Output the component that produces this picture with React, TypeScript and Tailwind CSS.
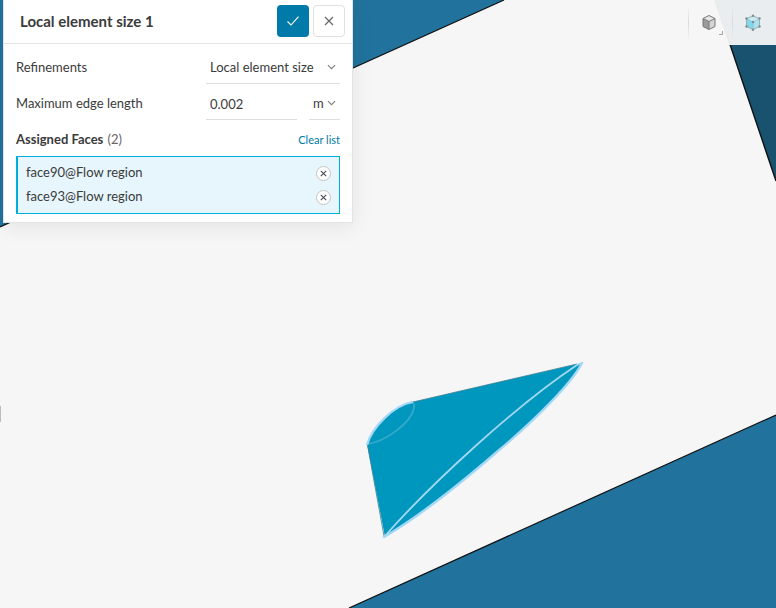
import { useState } from "react";

const FACES = ["face90@Flow region", "face93@Flow region"];

function Chevron() {
  return (
    <svg viewBox="0 0 10 6" className="pointer-events-none absolute top-4 right-1 h-[6px] w-[9px]" fill="none" stroke="#7c7c7c" strokeWidth="1.2" aria-hidden="true">
      <path d="M1 0.8 L5 4.8 L9 0.8" />
    </svg>
  );
}

function Scene() {
  return (
    <svg
      viewBox="0 0 776 608"
      preserveAspectRatio="xMinYMin slice"
      className="absolute inset-0 h-full w-full"
      role="img"
      aria-label="Model view"
    >
      <path d="M0 0 H504 L0 227 Z" fill="#21739d" />
      <path d="M504 0 L0 227" stroke="#101010" strokeWidth="1.2" />
      <path d="M349 608 L776 415 V608 Z" fill="#21739d" />
      <path d="M349 608 L776 415" stroke="#101010" strokeWidth="1.2" />
      <path d="M715 0 L776 181 V0 Z" fill="#19526e" />
      <path d="M715 0 L776 181" stroke="#101010" strokeWidth="1.4" />
      <path
        d="M367 444 C373 426 396 405 413 402 L582 363 C572 383 535 420 498 451 C460 484 420 516 385 537 Z"
        fill="#0097be"
      />
      <path d="M413 402 L577 364 M367.500 445 L384 536" stroke="#3b7f92" strokeWidth="0.8" />
      <path d="M367 444 C385 442 411 423 414 408 Q415 403 411 402" fill="none" stroke="#35a9ca" strokeWidth="1.8" />
      <path d="M367 445 C372 427 394 405 413 402" fill="none" stroke="#a3d8f5" strokeWidth="2.2" />
      <path d="M384 537 C429 486 515 406 577 365 L582 363" fill="none" stroke="#a3d8f5" strokeWidth="1.8" />
      <path
        d="M384 537 C420 516 460 484 498 451 C535 420 572 383 582 363"
        fill="none"
        stroke="#a3d8f5"
        strokeWidth="2.4"
        strokeLinecap="round"
      />
    </svg>
  );
}

function SolidCube() {
  return (
    <svg viewBox="0 0 16 18" className="h-[18px] w-4" strokeLinejoin="round" aria-hidden="true">
      <path d="M8 1.500 L14 4.500 L8 7.500 L2 4.500 Z" fill="#e6e6e6" />
      <path d="M2 4.500 L8 7.500 V15.500 L2 12.500 Z" fill="#9b9b9b" />
      <path d="M14 4.500 L8 7.500 V15.500 L14 12.500 Z" fill="#d4d4d4" />
      <path d="M8 1.500 L14 4.500 V12.500 L8 15.500 L2 12.500 V4.500 Z M2 4.500 L8 7.500 L14 4.500 M8 7.500 V15.500" fill="none" stroke="#777777" />
    </svg>
  );
}

function VertexCube() {
  return (
    <svg viewBox="0 0 16 18" className="h-[18px] w-4" strokeLinejoin="round" aria-hidden="true">
      <path d="M8 2 L14.500 4.500 L8 8 L1.500 4.500 Z" fill="#cdeaf1" />
      <path d="M1.500 4.500 L8 8 V15.500 L1.500 12.500 Z" fill="#84d6ea" />
      <path d="M14.500 4.500 L8 8 V15.500 L14.500 12.500 Z" fill="#a9e1ef" />
      <path d="M8 2 L14.500 4.500 V12.500 L8 15.500 L1.500 12.500 V4.500 Z" fill="none" stroke="#8fa9b0" strokeWidth="0.9" />
      <path d="M1.500 4.500 L8 8 L14.500 4.500 M8 8 V15.500" fill="none" stroke="#8cc3d0" strokeWidth="0.8" />
      <g fill="#7f8d91">
        <circle cx="8" cy="1.800" r="1.200" />
        <circle cx="1.500" cy="4.500" r="1.200" />
        <circle cx="14.500" cy="4.500" r="1.200" />
        <circle cx="8" cy="8" r="1.200" />
        <circle cx="1.500" cy="12.500" r="1.200" />
        <circle cx="14.500" cy="12.500" r="1.200" />
        <circle cx="8" cy="15.800" r="1.200" />
      </g>
    </svg>
  );
}

function Toolbar() {
  const divider = "h-9 w-px bg-linear-to-b from-transparent via-[#d8dbdc] to-transparent";
  return (
    <div className="ml-auto flex h-[45px] items-center justify-end bg-[#f6f6f6]/95 pr-[15px] pl-4">
      <span className={divider} />
      <button type="button" aria-label="Shaded display" className="relative flex h-9 w-[43px] items-center pl-3">
        <SolidCube />
        <svg viewBox="0 0 4 4" className="absolute right-[9px] bottom-[6px] h-1 w-1" fill="none" stroke="#a2a2a2" aria-hidden="true">
          <path d="M3.500 0 V3.500 H0" />
        </svg>
      </button>
      <span className={divider} />
      <button type="button" aria-label="Select volumes" className="flex h-9 w-7 items-center justify-end">
        <VertexCube />
      </button>
    </div>
  );
}

export default function App() {
  const [faces, setFaces] = useState(FACES);
  const [length, setLength] = useState("0.002");

  return (
    <main className="relative min-h-screen overflow-hidden bg-[#f6f6f6] font-['Lato',sans-serif] text-[13px] leading-5 text-[#3b3b3b]">
      <Scene />
      <span className="absolute top-[406px] left-0 h-4 w-px bg-[#bdbdbd]" />
      <div className="relative flex items-start pl-[3px]">
        <form
          className="w-[350px] shrink-0 border-x border-b border-[#e3e3e3] bg-white shadow-[0_4px_20px_rgba(0,0,0,0.08)]"
          onSubmit={(e) => e.preventDefault()}
        >
          <header className="flex h-11 items-center gap-1 border-b border-[#e3e3e3] pr-[7px] pb-px pl-4">
            <h1 className="flex-1 text-[15px] font-bold">Local element size 1</h1>
            <button type="submit" aria-label="Apply" className="flex size-8 items-center justify-center rounded bg-[#007aa9]">
              <svg viewBox="0 0 12 10" className="h-[10px] w-3" fill="none" stroke="#ffffff" strokeWidth="1.1" aria-hidden="true">
                <path d="M0.500 5.500 L4 9 L11.500 0.700" />
              </svg>
            </button>
            <button type="button" aria-label="Close" className="flex size-8 items-center justify-center rounded border border-[#e0e0e0] bg-white">
              <svg viewBox="0 0 10 10" className="size-[10px]" fill="none" stroke="#666666" strokeWidth="1.2" aria-hidden="true">
                <path d="M1 1 L9 9 M9 1 L1 9" />
              </svg>
            </button>
          </header>

          <div className="px-3 pt-1 pb-2">
            <div className="flex h-9 items-center">
              <label htmlFor="refinement" className="flex-1 pt-px">
                Refinements
              </label>
              <div className="relative flex h-9 w-[134px] items-center border-b border-[#dedede]">
                <select id="refinement" className="h-full w-full appearance-none bg-transparent pt-0.5 pr-5 pl-1 outline-none">
                  <option>Local element size</option>
                </select>
                <Chevron />
              </div>
            </div>

            <div className="flex h-9 items-center">
              <label htmlFor="edge-length" className="flex-1 pt-px">
                Maximum edge length
              </label>
              <input
                id="edge-length"
                value={length}
                onChange={(e) => setLength(e.target.value)}
                className="h-9 w-[91px] border-b border-[#dedede] bg-transparent pt-1 pl-1 outline-none"
              />
              <div className="relative ml-3 flex h-9 w-[31px] items-center border-b border-[#dedede]">
                <select aria-label="Unit" className="h-full w-full appearance-none bg-transparent pt-0.5 pl-1 outline-none">
                  <option>m</option>
                </select>
                <Chevron />
              </div>
            </div>

            <div className="flex h-9 items-center pt-px">
              <h2 className="flex-1 font-bold">
                Assigned Faces <span className="ml-px font-normal text-[#666666]">({faces.length})</span>
              </h2>
              <button type="button" onClick={() => setFaces([])} className="pt-0.5 text-[11px] text-[#007aa9]">
                Clear list
              </button>
            </div>

            <ul className="border border-l-2 border-[#00aedb] bg-[#e6f6fc] py-1 pr-2 pl-2">
              {faces.map((face) => (
                <li key={face} className="flex h-6 items-center justify-between">
                  <span className="pb-0.5">{face}</span>
                  <button
                    type="button"
                    aria-label={"Remove " + face}
                    onClick={() => setFaces(faces.filter((f) => f !== face))}
                    className="flex size-[15px] items-center justify-center rounded-full border border-[#c4c4c4] bg-white"
                  >
                    <svg viewBox="0 0 7 7" className="size-[7px]" fill="none" stroke="#4c5260" strokeWidth="1.2" aria-hidden="true">
                      <path d="M0.800 0.800 L6.200 6.200 M6.200 0.800 L0.800 6.200" />
                    </svg>
                  </button>
                </li>
              ))}
            </ul>
          </div>
        </form>
        <Toolbar />
      </div>
    </main>
  );
}
